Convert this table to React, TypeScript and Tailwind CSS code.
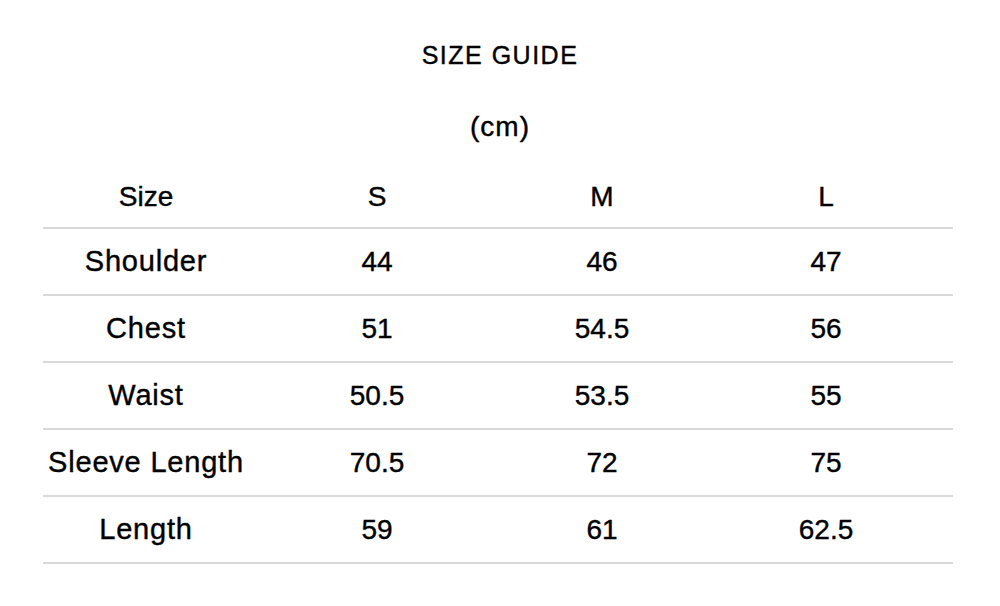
const rows: [string, string, string, string][] = [
  ["Shoulder", "44", "46", "47"],
  ["Chest", "51", "54.5", "56"],
  ["Waist", "50.5", "53.5", "55"],
  ["Sleeve Length", "70.5", "72", "75"],
  ["Length", "59", "61", "62.5"],
];

const cols = "grid grid-cols-[206px_256px_194px_254px] items-center text-center";

export default function App() {
  return (
    <div className="w-[1000px] h-[606px] bg-white text-black font-['Liberation_Sans',Arial,sans-serif] [-webkit-text-stroke:0.4px_black]">
      <div className="pt-[40px] text-center text-[25px] leading-[30px] tracking-[1.5px]">SIZE GUIDE</div>
      <div className="mt-[42px] text-center text-[28px] leading-[30px] tracking-[1px]">(cm)</div>

      <div className="mt-[25px] ml-[43px] w-[910px] text-[28px]">
        <div className={`${cols} h-[62px] border-b-2 border-[#d9d9d9]`}>
          <div>Size</div>
          <div>S</div>
          <div>M</div>
          <div>L</div>
        </div>
        {rows.map((r) => (
          <div key={r[0]} className={`${cols} h-[67px] border-b-2 border-[#d9d9d9]`}>
            <div className="text-[29px] tracking-[0.8px]">{r[0]}</div>
            <div>{r[1]}</div>
            <div>{r[2]}</div>
            <div>{r[3]}</div>
          </div>
        ))}
      </div>
    </div>
  );
}
